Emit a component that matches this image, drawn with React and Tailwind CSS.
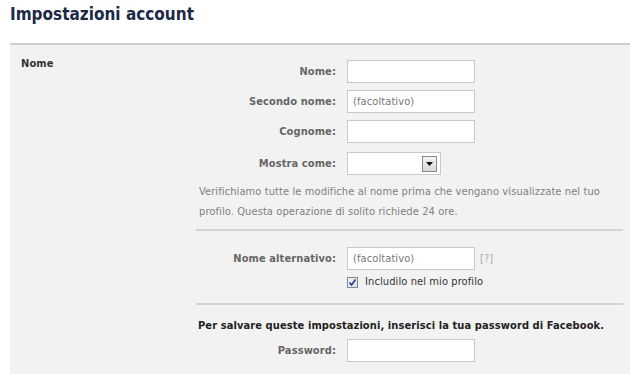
import React from "react";

function Field({ label, children, className = "" }) {
  return (
    <div className={"flex items-center " + className}>
      <div className="w-[140px] shrink-0 text-right font-bold text-[#666]">{label}</div>
      <div className="ml-[11px] flex items-center">{children}</div>
    </div>
  );
}

function TextBox({ value = "" }) {
  return (
    <div className="w-[128px] h-[23px] bg-white border border-[#c9c9c9] flex items-center pl-[5px] text-[#777]">
      {value}
    </div>
  );
}

export default function App() {
  return (
    <div
      className="w-[630px] h-[374px] bg-white overflow-hidden text-[11px] leading-[14px] tracking-[0.1px] text-[#333]"
      style={{ fontFamily: '"DejaVu Sans Condensed", "DejaVu Sans", Tahoma, sans-serif' }}
    >
      <div className="pl-[10px] pt-[3px] h-[43px]">
        <h1 className="text-[17px] leading-[22px] font-bold tracking-normal text-[#1c2a47]">Impostazioni account</h1>
      </div>
      <div className="ml-[10px] border-t-2 border-[#cfcfcf] bg-[#f2f2f2] flex h-[340px]">
        <div className="w-[186px] shrink-0 pl-[11px] pt-[12px] font-bold text-[#333]">Nome</div>
        <div className="w-[427px] pt-[15px]">
          <div className="flex flex-col gap-[7px]">
            <Field label="Nome:"><TextBox /></Field>
            <Field label="Secondo nome:"><TextBox value="(facoltativo)" /></Field>
            <Field label="Cognome:"><TextBox /></Field>
            <Field label="Mostra come:" className="mt-[2px]">
              <div className="w-[94px] h-[23px] bg-white border border-[#c9c9c9] flex items-center justify-end pr-[3px]">
                <div className="w-[15px] h-[16px] border border-[#8a8a8a] bg-gradient-to-b from-[#f4f4f4] to-[#d9d9d9] flex items-center justify-center">
                  <svg width="7" height="4" viewBox="0 0 7 4"><path d="M0 0h7L3.5 4z" fill="#111" /></svg>
                </div>
              </div>
            </Field>
          </div>
          <p className="mt-[7px] pl-[3px] leading-[20px] text-[#808080]">
            Verifichiamo tutte le modifiche al nome prima che vengano visualizzate nel tuo profilo. Questa operazione di solito richiede 24 ore.
          </p>
          <div className="mt-[7px] h-[2px] bg-[#d4d4d4]" />
          <Field label="Nome alternativo:" className="mt-[16px]">
            <TextBox value="(facoltativo)" />
            <span className="ml-[5px] text-[#aaa]">[?]</span>
          </Field>
          <div className="mt-[5px] ml-[151px] flex items-center h-[14px]">
            <div className="w-[11px] h-[11px] border border-[#7b8aa3] bg-gradient-to-br from-[#f3f3f3] to-[#dcdcdc] flex items-center justify-center">
              <svg width="9" height="9" viewBox="0 0 9 9"><path d="M1.5 4.5 L3.5 7 L7.5 1.5" stroke="#2b3d86" strokeWidth="1.6" fill="none" /></svg>
            </div>
            <span className="ml-[7px] text-[#333]">Includilo nel mio profilo</span>
          </div>
          <div className="mt-[14px] h-[2px] bg-[#d4d4d4]" />
          <div className="mt-[14px] pl-[2px] font-bold text-[#222] whitespace-nowrap">
            Per salvare queste impostazioni, inserisci la tua password di Facebook.
          </div>
          <Field label="Password:" className="mt-[6px]"><TextBox /></Field>
        </div>
      </div>
    </div>
  );
}
